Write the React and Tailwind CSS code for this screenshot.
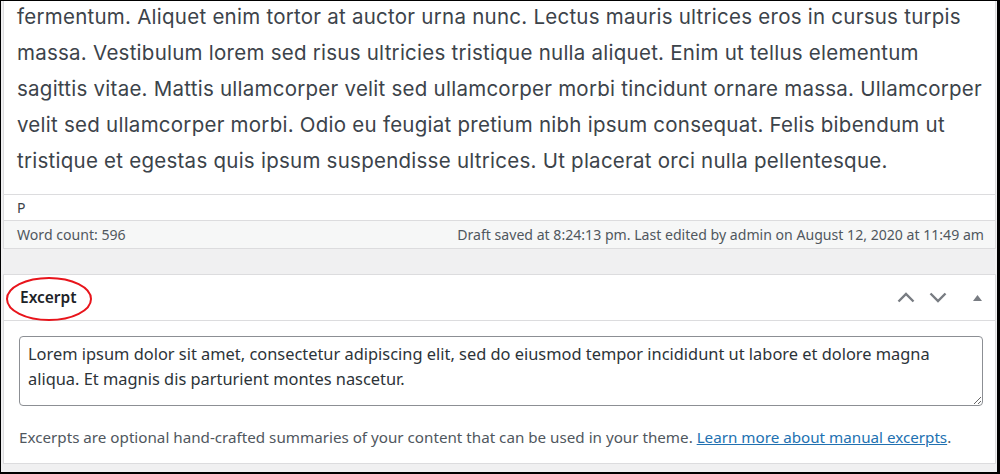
const editorLines = [
  'fermentum. Aliquet enim tortor at auctor urna nunc. Lectus mauris ultrices eros in cursus turpis',
  'massa. Vestibulum lorem sed risus ultricies tristique nulla aliquet. Enim ut tellus elementum',
  'sagittis vitae. Mattis ullamcorper velit sed ullamcorper morbi tincidunt ornare massa. Ullamcorper',
  'velit sed ullamcorper morbi. Odio eu feugiat pretium nibh ipsum consequat. Felis bibendum ut',
  'tristique et egestas quis ipsum suspendisse ultrices. Ut placerat orci nulla pellentesque.',
];

const excerptText =
  'Lorem ipsum dolor sit amet, consectetur adipiscing elit, sed do eiusmod tempor incididunt ut labore et dolore magna\naliqua. Et magnis dis parturient montes nascetur.';

const Chevron = ({ down }) => (
  <svg width="18" height="11" viewBox="0 0 18 11" fill="none">
    <path
      d={down ? 'M1.5 1.5 L9 9 L16.5 1.5' : 'M1.5 9.5 L9 2 L16.5 9.5'}
      stroke="#787c82"
      strokeWidth="2.4"
    />
  </svg>
);

const App = () => {
  return (
    <div
      className="relative w-[1000px] h-[474px] overflow-hidden bg-[#f0f0f1] border-t border-l border-r-[3px] border-b-2 border-black pl-[2px] pr-px"
      style={{ fontFamily: '"Noto Sans", sans-serif' }}
    >
      {/* editor */}
      <div className="bg-white border-x border-b border-[#dcdcde]">
        <div className="h-[194px] overflow-hidden border-b border-[#dcdcde] pl-[13px]">
          <div
            className="-mt-[2px] text-[20.5px] leading-[36px] tracking-[0.25px] text-[#3c434a]"
            style={{ fontFamily: 'Inter, "Noto Sans", sans-serif' }}
          >
            {editorLines.map((l) => (
              <div key={l} className="whitespace-nowrap">{l}</div>
            ))}
          </div>
        </div>
        <div className="h-[26px] border-b border-[#dcdcde] pl-[13px] text-[14px] leading-[25px] text-[#3c434a]">
          P
        </div>
        <div className="h-[27px] bg-[#f6f7f7] flex items-center justify-between pl-[13px] pr-[11px] text-[14.1px] text-[#50575e]">
          <span>Word count: 596</span>
          <span>Draft saved at 8:24:13 pm. Last edited by admin on August 12, 2020 at 11:49 am</span>
        </div>
      </div>

      <div className="h-[25px]" />

      {/* excerpt box */}
      <div className="relative bg-white border border-[#dcdcde] h-[190px]">
        <div className="h-[46px] border-b border-[#dcdcde] flex items-center justify-between pl-[16px]">
          <h2 className="text-[15.5px] font-semibold text-[#1d2327]">Excerpt</h2>
          <div className="flex items-center h-full">
            <button className="w-[32px] h-full flex items-center justify-center">
              <Chevron />
            </button>
            <button className="w-[31px] h-full flex items-center justify-center">
              <Chevron down />
            </button>
            <div className="w-[6px]" />
            <button className="w-[36px] h-full flex items-center justify-center">
              <svg width="9" height="6" viewBox="0 0 9 6">
                <path d="M0 6 L4.5 0 L9 6 Z" fill="#787c82" />
              </svg>
            </button>
          </div>
        </div>
        <div className="pt-[15px] pl-[15px]">
          <textarea
            readOnly
            defaultValue={excerptText}
            className="block w-[964px] h-[70px] resize-y rounded-[4px] border border-[#8c8f94] px-[8px] py-[4px] text-[16.4px] leading-[25px] text-[#2c3338] outline-none"
            style={{ fontFamily: '"Noto Sans", sans-serif' }}
          />
          <p className="mt-[20px] text-[15.2px] text-[#50575e]">
            Excerpts are optional hand-crafted summaries of your content that can be used in your theme.{' '}
            <a href="#" className="text-[#2271b1] underline">
              Learn more about manual excerpts
            </a>
            .
          </p>
        </div>

        {/* red annotation ellipse */}
        <svg className="absolute -left-px top-0 pointer-events-none" width="92" height="48" viewBox="0 0 92 48">
          <ellipse cx="46" cy="24" rx="42" ry="21" fill="none" stroke="#e8141b" strokeWidth="2" />
        </svg>
      </div>
    </div>
  );
};

export default App;
